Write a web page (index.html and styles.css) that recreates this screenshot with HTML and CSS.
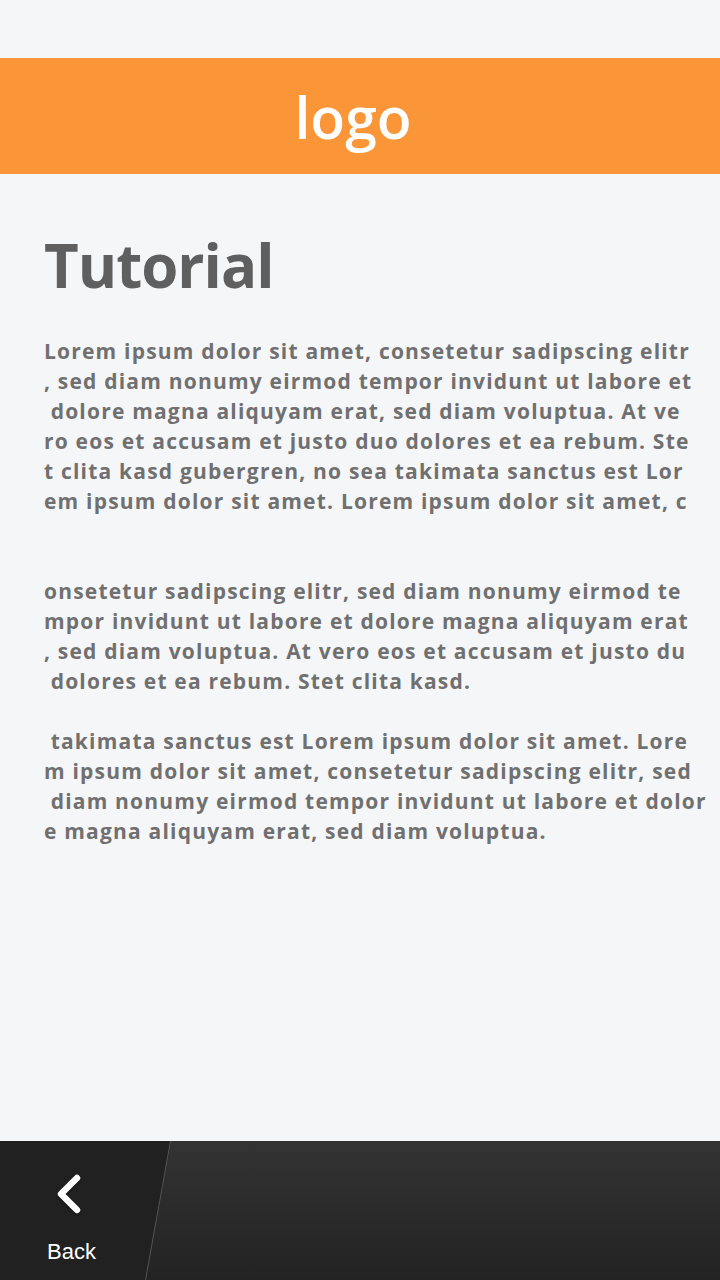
FILE: index.html
```html
<!DOCTYPE html>
<html>
<head>
<meta charset="utf-8">
<link rel="stylesheet" href="styles.css">
</head>
<body>
<div class="screen">
  <div class="status"></div>
  <header class="header"><span class="logo">logo</span></header>
  <main class="content">
    <h1 class="title">Tutorial</h1>
    <p class="para para-1">Lorem ipsum dolor sit amet, consetetur sadipscing elitr
, sed diam nonumy eirmod tempor invidunt ut labore et
 dolore magna aliquyam erat, sed diam voluptua. At ve
ro eos et accusam et justo duo dolores et ea rebum. Ste
t clita kasd gubergren, no sea takimata sanctus est Lor
em ipsum dolor sit amet. Lorem ipsum dolor sit amet, c</p>
    <p class="para para-2">onsetetur sadipscing elitr, sed diam nonumy eirmod te
mpor invidunt ut labore et dolore magna aliquyam erat
, sed diam voluptua. At vero eos et accusam et justo du
 dolores et ea rebum. Stet clita kasd.</p>
    <p class="para para-3"> takimata sanctus est Lorem ipsum dolor sit amet. Lore
m ipsum dolor sit amet, consetetur sadipscing elitr, sed
 diam nonumy eirmod tempor invidunt ut labore et dolor
e magna aliquyam erat, sed diam voluptua.</p>
  </main>
  <nav class="bottombar">
    <div class="back">
      <svg class="chevron" width="34" height="48" viewBox="0 0 34 48">
        <polyline points="24,8 8,24 24,40" fill="none" stroke="#ffffff" stroke-width="6.5" stroke-linecap="round" stroke-linejoin="round"/>
      </svg>
      <span class="back-label">Back</span>
    </div>
    <svg class="divider" width="30" height="139" viewBox="0 0 30 139">
      <line x1="25.5" y1="0" x2="0.5" y2="139" stroke="#555555" stroke-width="1"/>
    </svg>
  </nav>
</div>
</body>
</html>
```

FILE: styles.css
```css
html, body {
  margin: 0;
  padding: 0;
  background: #f5f6f8;
}

.screen {
  width: 720px;
  height: 1280px;
  display: flex;
  flex-direction: column;
  background: #f5f6f8;
  overflow: hidden;
}

.status {
  height: 58px;
  flex: none;
}

.header {
  height: 116px;
  flex: none;
  background: #fa9538;
  display: flex;
  align-items: center;
  justify-content: center;
  padding-right: 14px;
}

.logo {
  font-family: "Open Sans", sans-serif;
  font-weight: 600;
  font-size: 57px;
  color: #ffffff;
  line-height: 1;
  margin-top: 2px;
}

.content {
  flex: 1;
  padding: 0 44px;
}

.title {
  font-family: "Open Sans", sans-serif;
  font-weight: 700;
  font-size: 60px;
  line-height: 60px;
  color: #5f5f5f;
  margin: 61px 0 0 0;
  letter-spacing: -1px;
}

.para {
  font-family: "Open Sans", sans-serif;
  font-weight: 700;
  font-size: 21px;
  line-height: 30px;
  color: #707070;
  margin: 0;
  white-space: pre;
  letter-spacing: 1.2px;
}

.para-1 {
  margin-top: 41px;
}

.para-2 {
  margin-top: 60px;
}

.para-3 {
  margin-top: 30px;
}

.bottombar {
  height: 139px;
  flex: none;
  position: relative;
  background: linear-gradient(#333333, #232323);
  display: flex;
}

.back {
  width: 171px;
  height: 139px;
  background: #212121;
  clip-path: polygon(0 0, 171px 0, 146px 100%, 0 100%);
  display: flex;
  flex-direction: column;
  align-items: flex-start;
}

.chevron {
  margin: 29px 0 0 53px;
  filter: drop-shadow(0 1px 1px rgba(0,0,0,0.6));
}

.back-label {
  font-family: "Liberation Sans", Arial, sans-serif;
  font-size: 22px;
  color: #ffffff;
  margin: 22px 0 0 47px;
  line-height: 24px;
}

.divider {
  position: absolute;
  left: 145px;
  top: 0;
}
```
